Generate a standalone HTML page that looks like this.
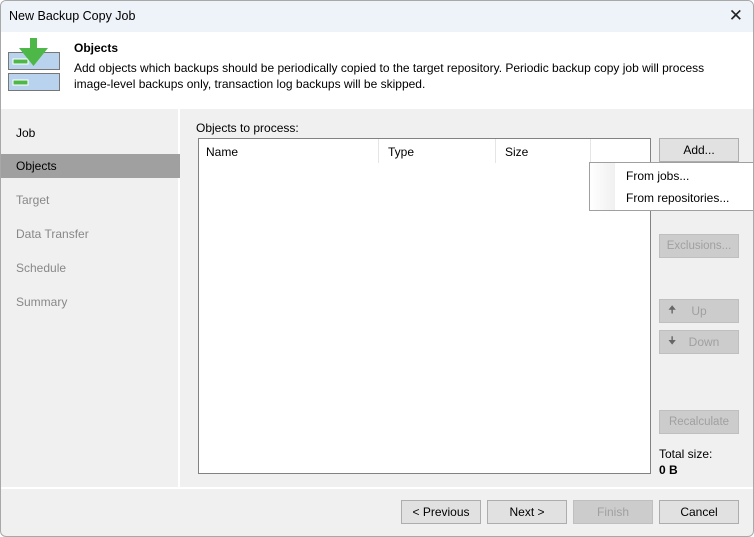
<!DOCTYPE html>
<html><head><style>
*{box-sizing:border-box;margin:0;padding:0}
body{width:754px;height:537px;overflow:hidden;font-family:"Liberation Sans",sans-serif;font-size:12px;color:#000;background:#fff}
.win{position:absolute;left:0;top:0;width:754px;height:537px;border:1px solid #a8a8a8;border-radius:6px;background:#f0f0f0;overflow:hidden}
.title{position:absolute;left:0;top:0;width:752px;height:31px;background:#eef2f9;font-size:12.5px;padding:8px 8px}
.x{position:absolute;right:10px;top:5px;font-size:17px;color:#222}
.hdr{position:absolute;left:0;top:31px;width:752px;height:77px;background:#fff}
.hdr b{position:absolute;left:73px;top:9px;font-size:12px}
.hdr p{position:absolute;left:73px;top:28px;width:670px;line-height:16px;font-size:12px}
.nav{position:absolute;left:0;top:108px;width:179px;height:378px;border-right:2px solid #fff}
.nav div{position:absolute;left:0;width:179px;height:24px;padding:5px 15px;font-size:12px;color:#888}
.abs{position:absolute}
.btn{position:absolute;width:80px;height:24px;background:#e1e1e1;border:1px solid #adadad;text-align:center;line-height:22px;font-size:12px}
.dis{background:#cccccc;border-color:#bfbfbf;color:#a0a0a0}
</style></head><body>
<div class="win">
<div class="title">New Backup Copy Job<span class="x">✕</span></div>
<div class="hdr">
<svg class="abs" style="left:6px;top:5px" width="54" height="60">
<rect x="1.5" y="15.5" width="51" height="17" fill="#b9d3ee" stroke="#777"/>
<rect x="1.5" y="36.5" width="51" height="17" fill="#b9d3ee" stroke="#777"/>
<rect x="6" y="22" width="15" height="5" fill="#4db848" stroke="#fff"/>
<rect x="6" y="43" width="15" height="5" fill="#4db848" stroke="#fff"/>
<path d="M23 1h7v10h11l-14.5 18-14.5-18h11z" fill="#4db848"/>
</svg>
<b>Objects</b>
<p>Add objects which backups should be periodically copied to the target repository. Periodic backup copy job will process image-level backups only, transaction log backups will be skipped.</p>
</div>
<div class="nav">
<div style="top:12px;color:#000">Job</div>
<div style="top:45px;background:#a0a0a0;color:#000">Objects</div>
<div style="top:79px">Target</div>
<div style="top:113px">Data Transfer</div>
<div style="top:147px">Schedule</div>
<div style="top:181px">Summary</div>
</div>
<div class="abs" style="left:195px;top:120px;font-size:12px">Objects to process:</div>
<div class="abs" style="left:197px;top:137px;width:453px;height:336px;background:#fff;border:1px solid #828282">
<div class="abs" style="left:0;top:0;width:451px;height:24px;font-size:12px">
<span class="abs" style="left:7px;top:6px">Name</span>
<span class="abs" style="left:179px;top:0;height:24px;border-left:1px solid #e5e5e5"></span>
<span class="abs" style="left:189px;top:6px">Type</span>
<span class="abs" style="left:296px;top:0;height:24px;border-left:1px solid #e5e5e5"></span>
<span class="abs" style="left:306px;top:6px">Size</span>
<span class="abs" style="left:391px;top:0;height:24px;border-left:1px solid #e5e5e5"></span>
</div></div>
<div class="btn" style="left:658px;top:137px">Add...</div>
<div class="btn dis" style="left:658px;top:233px;font-size:11.5px">Exclusions...</div>
<div class="btn dis" style="left:658px;top:298px"><span class="abs" style="left:8px;color:#666;font-size:10px">🠉</span>Up</div>
<div class="btn dis" style="left:658px;top:329px"><span class="abs" style="left:8px;color:#666;font-size:10px">🠋</span>&nbsp;&nbsp;&nbsp;Down</div>
<div class="btn dis" style="left:658px;top:409px;font-size:11.5px">Recalculate</div>
<div class="abs" style="left:658px;top:446px;font-size:12px">Total size:</div>
<div class="abs" style="left:658px;top:462px;font-size:12px;font-weight:bold">0 B</div>
<div class="abs" style="left:588px;top:161px;width:165px;height:49px;background:#fff;border:1px solid #a0a0a0;font-size:12px">
<div class="abs" style="left:0;top:0;width:25px;height:47px;background:linear-gradient(90deg,#fff,#f0f0f0)"></div>
<span class="abs" style="left:36px;top:6px">From jobs...</span>
<span class="abs" style="left:36px;top:28px">From repositories...</span>
</div>
<div class="abs" style="left:0;top:486px;width:752px;height:2px;background:#fff"></div>
<div class="btn" style="left:400px;top:499px">&lt; Previous</div>
<div class="btn" style="left:486px;top:499px">Next &gt;</div>
<div class="btn dis" style="left:572px;top:499px">Finish</div>
<div class="btn" style="left:658px;top:499px">Cancel</div>
</div>
</body></html>
